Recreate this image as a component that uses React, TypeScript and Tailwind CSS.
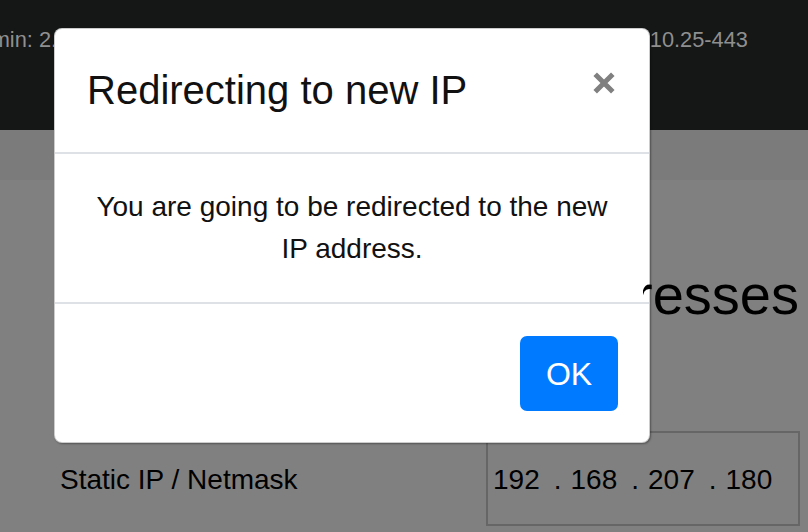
const octets = ['192', '168', '207', '180']

export default function App() {
  return (
    <div className="relative w-[808px] h-[532px] overflow-hidden bg-[#808080] font-['Liberation_Sans',Arial,sans-serif] text-black">
      <header className="h-[130px] bg-[#151616] flex justify-between text-[21.8px] leading-[32px] text-[#8f8f8f] pt-[24px]">
        <span className="ml-[-35px] whitespace-nowrap">Admin: 2.8.0</span>
        <span className="mr-[60px] whitespace-nowrap">192.168.10.25-443</span>
      </header>
      <div className="h-[50px] bg-[#7b7b7b]" />

      <main>
        <div className="relative z-[60] ml-[643px] mt-[81px] flex justify-end overflow-hidden pr-[9px]">
          <h2 className="whitespace-nowrap text-[56px] leading-[67px]">Addresses</h2>
        </div>

        <div className="flex items-start pl-[60px] mt-[103px]">
          <div className="w-[426px] mt-[28px] text-[28px] leading-[42px]">Static IP / Netmask</div>
          <div className="w-[314px] h-[95px] border-2 border-[#666] pl-[5px] pt-[26px] flex text-[28px] leading-[42px]">
            {octets.map((o, i) => (
              <span key={o} className="flex">
                <span>{o}</span>
                {i < octets.length - 1 && <span className="ml-[14px] mr-[9px]">.</span>}
              </span>
            ))}
          </div>
        </div>
      </main>

      <div className="absolute left-[54px] top-[28px] z-50 w-[596px] bg-white rounded-[8px] border border-black/20 shadow-[1px_1px_2px_rgba(0,0,0,0.35)]">
        <div className="flex items-start pt-[31px] pb-[32px] pl-[32px] pr-[34px] border-b-2 border-[#dee2e6]">
          <h4 className="text-[40px] leading-[60px] text-[#111]">Redirecting to new IP</h4>
          <button className="ml-auto mt-[12px]">
            <svg width="22" height="22" viewBox="0 0 22 22">
              <path d="M2.2 2.2 L19.8 19.8 M19.8 2.2 L2.2 19.8" stroke="#808080" strokeWidth="5" />
            </svg>
          </button>
        </div>
        <div className="px-[32px] py-[32px] border-b-2 border-[#dee2e6] text-center text-[28px] leading-[42px] text-[#111]">
          You are going to be redirected to the new IP address.
        </div>
        <div className="flex justify-end pt-[32px] pb-[31px] pr-[31px]">
          <button className="w-[98px] h-[75px] rounded-[7px] bg-[#007bff] text-white text-[32px] flex items-center justify-center">
            OK
          </button>
        </div>
      </div>
    </div>
  )
}
